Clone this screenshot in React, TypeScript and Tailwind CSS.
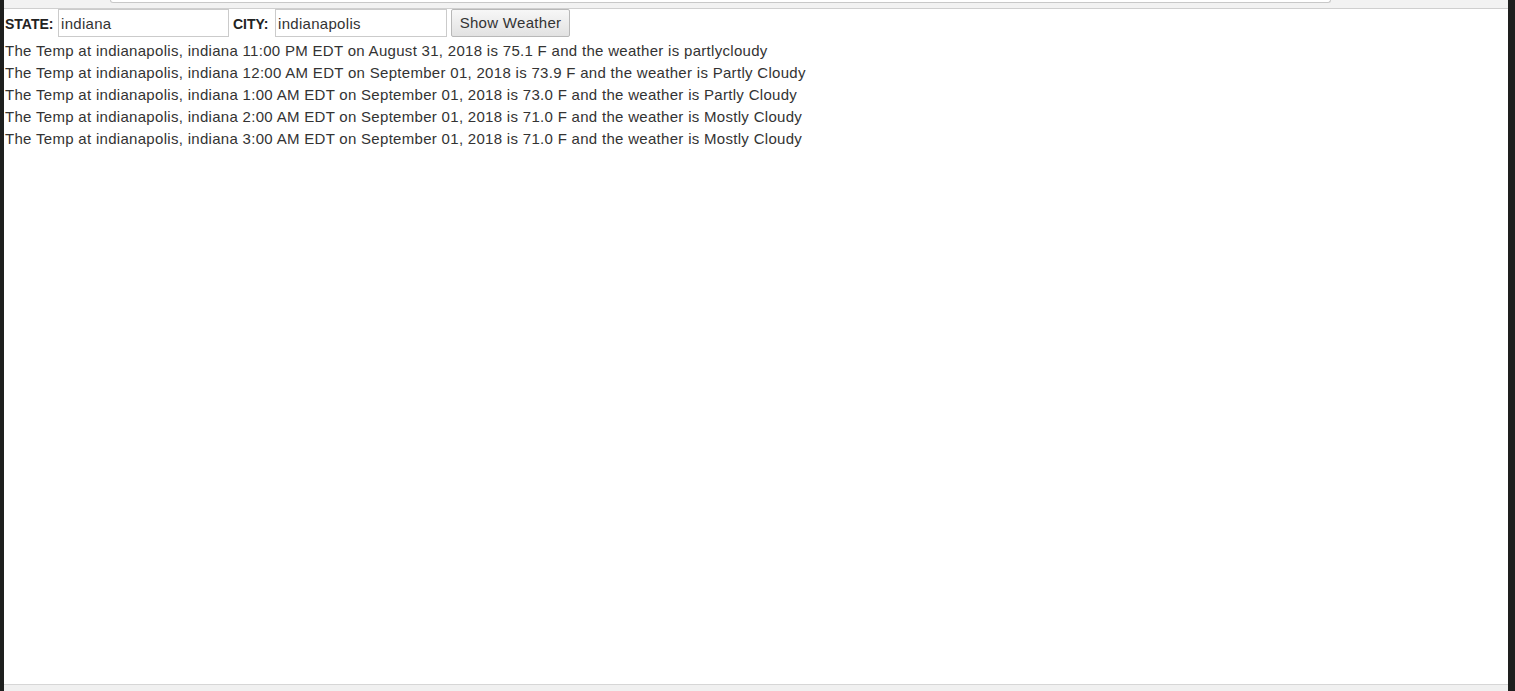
const rows = [
  { time: '11:00 PM', date: 'August 31, 2018', temp: '75.1', cond: 'partlycloudy' },
  { time: '12:00 AM', date: 'September 01, 2018', temp: '73.9', cond: 'Partly Cloudy' },
  { time: '1:00 AM', date: 'September 01, 2018', temp: '73.0', cond: 'Partly Cloudy' },
  { time: '2:00 AM', date: 'September 01, 2018', temp: '71.0', cond: 'Mostly Cloudy' },
  { time: '3:00 AM', date: 'September 01, 2018', temp: '71.0', cond: 'Mostly Cloudy' },
];

export default function App() {
  const state = 'indiana';
  const city = 'indianapolis';

  return (
    <div className="flex h-[691px] w-[1515px] bg-[#1e1f1e] font-['Liberation_Sans',Arial,sans-serif]">
      <div className="w-[4px] shrink-0" />
      <div className="flex flex-1 flex-col bg-white">
        {/* browser chrome edge */}
        <div className="h-[9px] shrink-0 border-b border-[#cfcfcf] bg-[#f2f2f2] pl-[106px] pr-[177px]">
          <div className="h-[3px] rounded-b-[3px] border-x border-b border-[#c8c8c8] bg-white" />
        </div>

        <div className="flex-1 pl-[1px] text-[#333]">
          <div className="flex h-[28px] items-center">
            <label className="w-[53px] pt-[2px] text-[14px] font-bold text-[#222]">STATE:</label>
            <input
              defaultValue={state}
              className="h-[28px] w-[171px] border border-[#cbcbcb] bg-white px-[2px] text-[15px] tracking-[0.3px] text-[#333] outline-none"
            />
            <label className="ml-[4px] w-[42px] pt-[2px] text-[14px] font-bold text-[#222]">CITY:</label>
            <input
              defaultValue={city}
              className="h-[28px] w-[172px] border border-[#cbcbcb] bg-white px-[2px] text-[15px] tracking-[0.3px] text-[#333] outline-none"
            />
            <button className="ml-[4px] h-[28px] w-[119px] rounded-[2px] border border-[#b8b8b8] bg-gradient-to-b from-[#f7f7f7] to-[#e2e2e2] text-[15px] tracking-[0.3px] text-[#333]">
              Show Weather
            </button>
          </div>
          <div className="mt-[3px] text-[15px] leading-[22px] tracking-[0.3px] text-[#333]">
            {rows.map((r, i) => (
              <div key={i}>
                The Temp at {city}, {state} {r.time} EDT on {r.date} is {r.temp} F and the weather is {r.cond}
              </div>
            ))}
          </div>
        </div>

        <div className="h-[7px] shrink-0 border-t border-[#d6d6d6] bg-[#f0f0f0]" />
      </div>
      <div className="w-[7px] shrink-0" />
    </div>
  );
}
